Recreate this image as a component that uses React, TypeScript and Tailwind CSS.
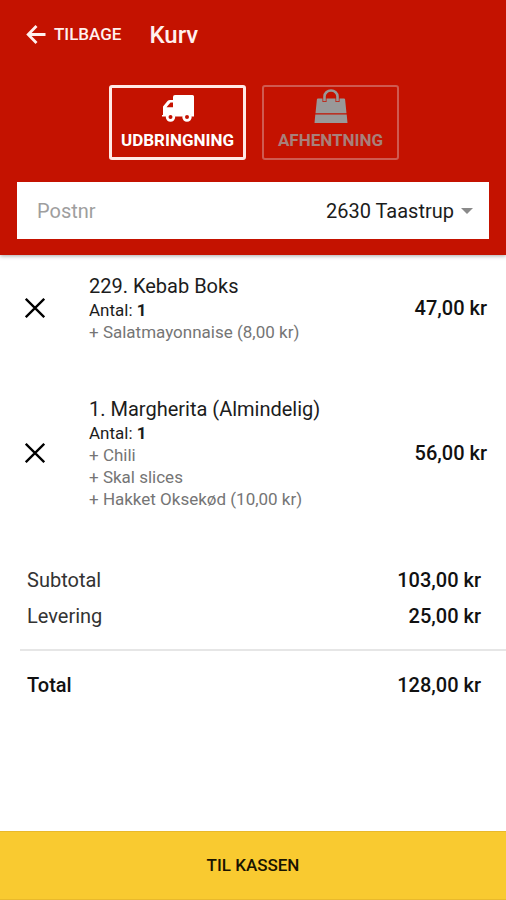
type Item = { id: string; name: string; qty: number; extras: string[]; price: string };

const items: Item[] = [
  { id: 'kebab', name: '229. Kebab Boks', qty: 1, extras: ['Salatmayonnaise (8,00 kr)'], price: '47,00 kr' },
  {
    id: 'margherita',
    name: '1. Margherita (Almindelig)',
    qty: 1,
    extras: ['Chili', 'Skal slices', 'Hakket Oksekød (10,00 kr)'],
    price: '56,00 kr',
  },
];

function BackArrow() {
  return (
    <svg viewBox="0 0 20 20" className="h-5 w-5" fill="none" stroke="currentColor" strokeWidth="2.8" aria-hidden="true">
      <path d="M19.500 9.500H2.500M10.500 1L2.200 9.500l8.300 8.500" />
    </svg>
  );
}

function Truck() {
  return (
    <svg viewBox="0 0 32 27" className="h-[27px] w-8" fill="currentColor" aria-hidden="true">
      <path
        fillRule="evenodd"
        d="M13 0H30.500Q32 0 32 1.500V21.500H29.300A4.500 4.500 0 0 0 20.700 21.500H12.800A4.500 4.500 0 0 0 4.200 21.500H0V20H1V11.500L5.500 6Q6.500 5 8 5H11V2Q11 0 13 0ZM8.500 7.500L4.500 12.300H11V7.500Z"
      />
      <path
        fillRule="evenodd"
        d="M8.500 17.400a4.700 4.700 0 1 0 0 9.400a4.700 4.700 0 0 0 0-9.400ZM8.500 20a2 2 0 1 1 0 4a2 2 0 0 1 0-4ZM25 17.400a4.700 4.700 0 1 0 0 9.400a4.700 4.700 0 0 0 0-9.400ZM25 20a2 2 0 1 1 0 4a2 2 0 0 1 0-4Z"
      />
    </svg>
  );
}

function Bag() {
  return (
    <svg viewBox="0 0 34 34" className="h-[34px] w-[34px]" fill="currentColor" aria-hidden="true">
      <path d="M4 9.500H30Q31 9.500 31.100 10.500L32.500 24.200H1.500L2.900 10.500Q3 9.500 4 9.500ZM1.300 25.600H32.700L33.500 34H.5Z" />
      <path d="M10.500 13V7.500a6.500 6.300 0 0 1 13 0V13" fill="none" stroke="#c41200" strokeWidth="4" />
      <path d="M10.500 12.300V7.500a6.500 6 0 0 1 13 0V12.300" fill="none" stroke="currentColor" strokeWidth="2.600" />
    </svg>
  );
}

function Cross() {
  return (
    <svg viewBox="0 0 20 20" className="h-5 w-5" fill="none" stroke="currentColor" strokeWidth="2.300" aria-hidden="true">
      <path d="M.8.8l18.400 18.400M19.200.8L.8 19.200" />
    </svg>
  );
}

function CartRow({ item }: { item: Item }) {
  return (
    <li className="flex items-center">
      <button type="button" aria-label={`Fjern ${item.name}`} className="mr-11 flex text-black">
        <Cross />
      </button>
      <div className="flex-1 text-[17px] leading-[22px]">
        <h2 className="text-xl leading-[26px] text-[#1c1c1c]">{item.name}</h2>
        <p className="text-[#1c1c1c]">
          Antal: <b>{item.qty}</b>
        </p>
        {item.extras.map((extra) => (
          <p key={extra} className="text-[#757575]">
            + {extra}
          </p>
        ))}
      </div>
      <p className="text-xl font-medium text-[#111111]">{item.price}</p>
    </li>
  );
}

export default function App() {
  return (
    <div className="flex min-h-screen flex-col bg-white font-['Roboto',sans-serif]">
      <header className="bg-[#c41200] px-[17px] pt-[15px] pb-4 shadow-[0_1px_4px_rgba(0,0,0,0.35)]">
        <div className="flex h-10 items-center gap-7 px-[9px] text-[#fff0ee]">
          <a href="#menu" className="flex items-center gap-2 text-[17px] font-medium">
            <BackArrow />
            TILBAGE
          </a>
          <h1 className="text-2xl font-medium">Kurv</h1>
        </div>
        <div className="mt-[30px] flex justify-center gap-4 pl-0.5">
          <button
            type="button"
            aria-pressed="true"
            className="flex h-[75px] w-[137px] flex-col items-center justify-end rounded-[3px] border-3 border-[#ffe9e6] pb-[3px] text-[17px] leading-7 font-bold text-white"
          >
            <Truck />
            <span className="mt-1">UDBRINGNING</span>
          </button>
          <button
            type="button"
            aria-pressed="false"
            className="flex h-[75px] w-[137px] flex-col items-center justify-end rounded-[3px] border-2 border-[#cf5a50] pb-1 text-[17px] leading-7 font-bold text-[#a8807a]"
          >
            <span className="text-[#999999]">
              <Bag />
            </span>
            <span className="mt-[3px]">AFHENTNING</span>
          </button>
        </div>
        <div className="mt-[22px] flex h-[57px] items-center justify-between bg-white pr-4 pl-5 text-xl">
          <label htmlFor="postnr" className="text-[#9e9e9e]">
            Postnr
          </label>
          <div className="flex items-center gap-[7px]">
            <select id="postnr" className="appearance-none bg-transparent text-right text-[#1c1c1c]">
              <option>2630 Taastrup</option>
            </select>
            <svg viewBox="0 0 12 6" className="h-[6px] w-3" fill="#8a8a8a" aria-hidden="true">
              <path d="M0 0h12L6 6z" />
            </svg>
          </div>
        </div>
      </header>

      <main className="flex-1">
        <ul className="flex flex-col gap-[53px] pt-[18px] pr-[19px] pl-[25px]">
          {items.map((item) => (
            <CartRow key={item.id} item={item} />
          ))}
        </ul>
        <dl className="mt-[52px] text-xl leading-9 text-[#333333]">
          <div className="flex justify-between pr-[25px] pl-[27px]">
            <dt>Subtotal</dt>
            <dd className="font-medium text-[#111111]">103,00 kr</dd>
          </div>
          <div className="flex justify-between pr-[25px] pl-[27px]">
            <dt>Levering</dt>
            <dd className="font-medium text-[#111111]">25,00 kr</dd>
          </div>
          <div className="mt-[15px] ml-5 flex justify-between border-t-2 border-[#e6e6e6] py-4 pr-[25px] pl-[7px] font-medium text-[#111111]">
            <dt>Total</dt>
            <dd>128,00 kr</dd>
          </div>
        </dl>
      </main>

      <button
        type="button"
        className="h-[69px] w-full border-y border-[#e9b92c] bg-[#f9ca30] text-[17px] font-medium text-[#1a1400]"
      >
        TIL KASSEN
      </button>
    </div>
  );
}
